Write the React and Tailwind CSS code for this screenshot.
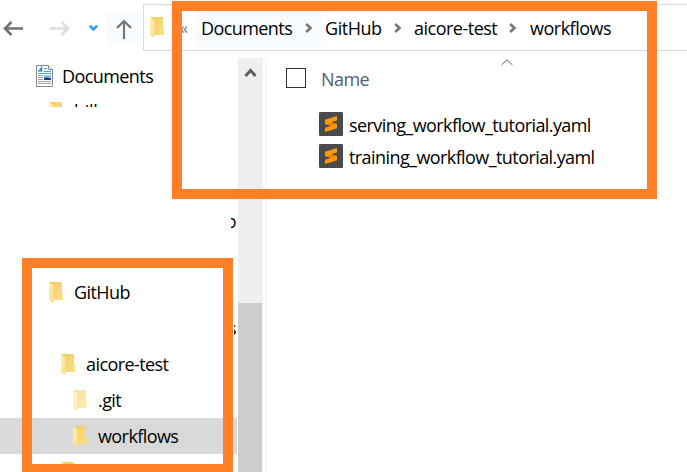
function Folder({ faded = false }) {
  return (
    <svg width="15" height="21" viewBox="0 0 15 21" className={faded ? "shrink-0 opacity-60" : "shrink-0"}>
      <defs>
        <linearGradient id="folderBack" x1="0" y1="0" x2="1" y2="1">
          <stop offset="0" stopColor="#efcc62" />
          <stop offset="1" stopColor="#fbdf8b" />
        </linearGradient>
        <linearGradient id="folderFront" x1="0" y1="0" x2="1" y2="1">
          <stop offset="0" stopColor="#fff0b4" />
          <stop offset="1" stopColor="#fbdc82" />
        </linearGradient>
      </defs>
      <path d="M0 0H13V11L14 12V18H3Z" fill="url(#folderBack)" />
      <path d="M0 0L4.5 3.5V20L3.5 21L0 18Z" fill="url(#folderFront)" />
    </svg>
  );
}

function DocumentIcon() {
  return (
    <svg width="18" height="22" viewBox="0 0 18 22" className="shrink-0">
      <path d="M.5 .5H12.5L16.5 4.5V21.5H.5Z" fill="#fff" stroke="#8a8a8a" />
      <path d="M12.5 .5V4.5H16.5" fill="#eee" stroke="#8a8a8a" />
      <path d="M2.5 7L5.5 2.5V7M3.5 5.5H6" fill="none" stroke="#1f8fd0" strokeWidth="1.3" />
      <path d="M8 3.5H11M8 6.5H15M2 8.5H15" fill="none" stroke="#4aa9dc" />
      <path d="M2 10.5H7M2 12.5H7M2 14.5H7M2 16.5H15M2 18.5H15" stroke="#a0a0a0" />
      <path d="M8 10H15V15H8Z" fill="#8fc4ec" />
      <path d="M8 13L10.5 12.3L15 13.5V15H8Z" fill="#1f3f67" />
    </svg>
  );
}

function SublimeIcon() {
  return (
    <svg width="24" height="24" viewBox="0 0 24 24" className="shrink-0">
      <rect width="24" height="24" rx="1.2" fill="#4a4a4a" />
      <path d="M18 4V8.4L12 10.2L18 12V16.2L6 20V15.7L12 13.8L6 12V7.8Z" fill="#ff9800" />
      <path d="M6 12L12 10.2L18 12V13.2L12 13.8Z" fill="#ef8b00" />
    </svg>
  );
}

function Chevron() {
  return (
    <svg width="8" height="10" viewBox="0 0 8 10" className="shrink-0">
      <path d="M1.2 1L5.5 5L1.2 9" fill="none" stroke="#7b7b7b" strokeWidth="2.7" />
    </svg>
  );
}

function TreeRow({ label, indent, faded, selected }) {
  return (
    <div className={`flex h-9 items-center ${indent} ${selected ? "bg-[#d9d9d9]" : ""}`}>
      <Folder faded={faded} />
      <span className="ml-[10px] whitespace-nowrap">{label}</span>
    </div>
  );
}

function FileRow({ name }) {
  return (
    <div className="flex h-8 items-center">
      <SublimeIcon />
      <span className="ml-[6px] whitespace-nowrap pt-[1px]">{name}</span>
    </div>
  );
}

export default function App() {
  return (
    <div className="relative flex h-[472px] w-[687px] flex-col overflow-hidden bg-white font-['Open_Sans','Noto_Sans',sans-serif] text-[18px] leading-6 tracking-[-0.58px] text-black">
      <header className="flex h-[51px] shrink-0">
        <div className="flex h-full w-[143px] shrink-0 items-center pt-[5px]">
          <svg width="143" height="46" viewBox="0 5 143 46" fill="none">
            <path d="M106 11H142V46H106Z" fill="#f8fcff" />
            <path d="M5 28.5H23M11.5 22L5 28.5L11.5 35" stroke="#707070" strokeWidth="2.5" />
            <path d="M50 28.5H68M61.5 22L68 28.5L61.5 35" stroke="#dedede" strokeWidth="2.5" />
            <path d="M89.8 25.8L93.5 29.3L97.2 25.8" stroke="#3c9df3" strokeWidth="2.8" />
            <path d="M124 39V21M117 28L124 21L131 28" stroke="#777" strokeWidth="2.2" />
          </svg>
        </div>
        <div className="mt-1 flex h-[47px] flex-1 items-center border-y border-l border-[#d9d9d9]">
          <div className="ml-[6px] flex w-[47px] items-center">
            <Folder />
            <span className="ml-[15px] text-[16px] leading-5 text-[#777]">«</span>
          </div>
          <div className="flex h-[38px] w-[99px] items-center bg-[#f8fbfe] pl-1">Documents</div>
          <div className="flex h-[38px] w-[25px] items-center justify-center bg-[#f8fbfe]"><Chevron /></div>
          <span className="ml-1 w-[69px] tracking-[-0.45px]">GitHub</span>
          <Chevron />
          <span className="ml-[12px] w-[95px] tracking-[-0.5px]">aicore-test</span>
          <Chevron />
          <span className="ml-[13px] tracking-[-0.5px]">workflows</span>
        </div>
      </header>
      <div className="flex min-h-0 flex-1">
        <aside className="w-[237px] shrink-0 overflow-hidden pt-[7px]">
          <div className="flex h-9 items-center pl-9">
            <DocumentIcon />
            <span className="ml-2">Documents</span>
          </div>
          <div className="flex h-[13px] items-start overflow-hidden pl-[49px] pt-[8px]">
            <Folder />
            <span className="-mt-[3px] ml-[10px] tracking-[-0.3px]">bill</span>
          </div>
          <div className="mt-[102px] flex h-6 justify-end pr-[1px]">
            <div className="flex w-[5px] justify-end overflow-hidden"><span>o</span></div>
          </div>
          <div className="mt-[41px]">
            <TreeRow label="GitHub" indent="pl-[49px]" />
          </div>
          <div className="flex h-9 items-center justify-end pr-[1px]">
            <div className="flex w-[2px] justify-end overflow-hidden"><span>s</span></div>
          </div>
          <TreeRow label="aicore-test" indent="pl-[61px]" />
          <TreeRow label=".git" indent="pl-[73px]" faded />
          <TreeRow label="workflows" indent="pl-[73px]" selected />
          <div className="flex h-[18px] pl-[61px] pt-2"><Folder /></div>
        </aside>
        <div className="ml-[1px] mt-[7px] flex w-[25px] shrink-0 flex-col bg-[#efefef]">
          <svg width="25" height="245" viewBox="0 0 25 245" fill="none">
            <path d="M7.5 18L12.5 12.5L17.5 18" stroke="#606060" strokeWidth="3" />
          </svg>
          <div className="w-6 flex-1 bg-[#cdcdcd]" />
        </div>
        <div className="ml-[2px] mt-[7px] w-[2px] shrink-0 bg-[#f6f6f6]" />
        <main className="min-w-0 flex-1 pl-[19px]">
          <div className="flex h-[57px] items-center">
            <div className="mt-[-3px] h-5 w-5 border border-[#333]" />
            <span className="ml-[15px] w-[48px] pb-[1px] text-[#4c607a]">Name</span>
            <svg width="12" height="7" viewBox="0 0 12 7" className="mb-[35px] ml-[132px]">
              <path d="M.5 6L6 .8L11.5 6" fill="none" stroke="#606060" />
            </svg>
          </div>
          <div className="pl-[33px]">
            <FileRow name="serving_workflow_tutorial.yaml" />
            <FileRow name="training_workflow_tutorial.yaml" />
          </div>
        </main>
      </div>
      <div className="absolute left-[172px] top-[1px] h-[198px] w-[485px] border-[10px] border-[#ff7f27]" />
      <div className="absolute left-[22px] top-[258px] h-[216px] w-[211px] border-[10px] border-[#ff7f27]" />
    </div>
  );
}
